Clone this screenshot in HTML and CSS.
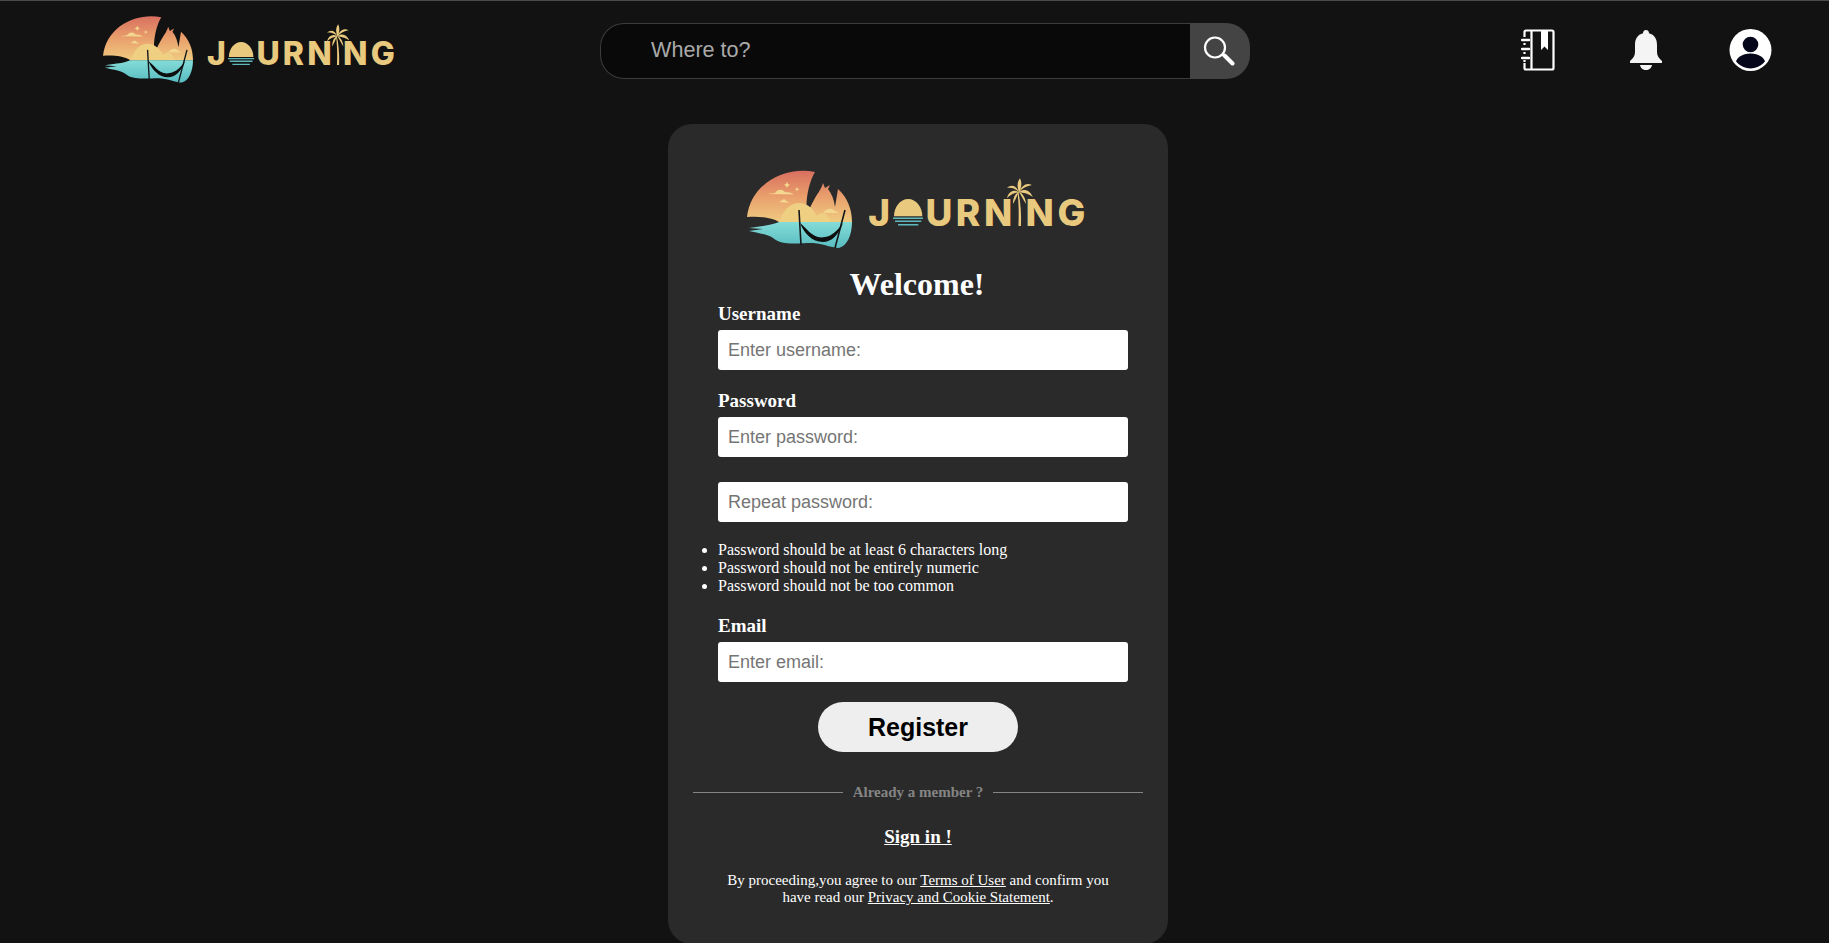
FILE: index.html
```html
<!DOCTYPE html>
<html lang="en">
<head>
    <meta charset="UTF-8">
    <meta name="viewport" content="width=device-width, initial-scale=1.0">
    <title>Journing - Register</title>
    <link rel="stylesheet" href="styles.css">
</head>
<body>

<!-- Logo parts, used in the navbar and in the card -->
<svg class="sprites" width="0" height="0" aria-hidden="true">
    <defs>
        <linearGradient id="sky" x1="0" y1="0" x2="0" y2="1">
            <stop offset="0" stop-color="#d86f5f"/>
            <stop offset="0.5" stop-color="#e99f6c"/>
            <stop offset="1" stop-color="#efcb80"/>
        </linearGradient>
        <linearGradient id="sea" x1="0" y1="0" x2="0" y2="1">
            <stop offset="0" stop-color="#84dcd8"/>
            <stop offset="1" stop-color="#58bcc0"/>
        </linearGradient>
        <symbol id="emblem" viewBox="0 0 105 78">
            <path fill="url(#sky)" d="M68 2C40-4 4 12 0 47C10 46 24 47 32 52L105 52C105 40 101 28 91 19L88 37C87 30 85 24 81 19L83 15L78 18L76 13C74 20 70 24 67 30C64 35 62 40 60 44C58 30 62 12 68 2Z"/>
            <path fill="#efcf82" d="M33 52C35 41 43 33 52 33C61 33 67 40 70 46C74 41 80 42 84 52Z"/>
            <path fill="#f3d68f" d="M20 24L28 23C31 19 35 19 38 22C42 22 45 23 47 24.500Z M32 32L37 29L42 33Z M78 41C81 38 85 38 88 41L92 43H76Z"/>
            <path fill="#f5d98f" d="M40 12l1 2 2 1-2 1-1 2-1-2-2-1 2-1zM50 17l.7 1.500 1.500.7-1.500.7-.7 1.500-.7-1.500-1.500-.7 1.500-.7z"/>
            <path fill="url(#sea)" d="M32 52L105 52C105 65 100 76 92 78C85 78 78 74 66 73C50 73 35 76 26 68C20 64 10 63 2 61L16 59L2 58L16 56C24 55 29 53 32 52Z"/>
            <path fill="none" stroke="#14181a" stroke-width="1.600" d="M52 40L54 75M98 40L88 78"/>
            <path fill="#0e0e0e" d="M53 53C60 58 66 70 78 67C85 66 91 60 96 53C91 66 84 72 76 72C65 72 57 63 53 53Z"/>
        </symbol>
        <symbol id="sun" viewBox="0 0 30 27">
            <path fill="currentColor" d="M1 17C1 8 7 0 15 0C23 0 29 8 29 17Z"/>
            <path fill="none" stroke="#5fb8bc" stroke-width="1.500" d="M0 19H30M2 22H28M5 25.500H25"/>
        </symbol>
        <symbol id="palm" viewBox="0 0 26 48">
            <path fill="currentColor" d="M11.500 14C14 26 14.500 38 14 48H11.500C12 38 12 26 10.500 14Z"/>
            <path fill="currentColor" d="M12 14C9 7 4 6 0 10C4 9 8 10 12 14ZM12 14C7 11 2 13 0 20C4 16 8 15 12 14ZM12 14C8 15 6 20 6 26C9 21 10 17 12 14ZM12 14C10 9 10 4 13 0C15 4 15 9 12 14ZM12 14C15 7 20 4 25 7C20 8 16 10 12 14ZM12 14C17 10 23 12 26 19C21 15 16 15 12 14ZM12 14C16 15 19 21 19 26C16 21 14 17 12 14Z"/>
        </symbol>
    </defs>
</svg>

<header class="navbar">
    <a class="brand brand-nav" href="#">
        <svg class="brand-emblem"><use href="#emblem"/></svg>
        <span class="brand-word">J<svg class="brand-sun"><use href="#sun"/></svg>URN<svg class="brand-palm"><use href="#palm"/></svg>NG</span>
    </a>

    <form class="search">
        <input class="search-input" type="text" placeholder="Where to?">
        <button class="search-btn" type="button" aria-label="Search">
            <svg width="32" height="30" viewBox="0 0 32 30">
                <circle cx="12" cy="11.500" r="10" fill="none" stroke="#fff" stroke-width="2.200"/>
                <path d="M19 18.500L22 20" stroke="#fff" stroke-width="2"/>
                <path d="M21.500 19.500L29.500 27.500" stroke="#fff" stroke-width="4" stroke-linecap="round"/>
            </svg>
        </button>
    </form>

    <nav class="nav-icons">
        <a href="#" aria-label="Journal">
            <svg class="icon-book" width="34" height="42" viewBox="0 0 34 42">
                <path fill="none" stroke="#fff" stroke-width="2.200" d="M3.500 8V3Q3.500 1.500 5 1.500H31Q32.500 1.500 32.500 3V39Q32.500 40.500 31 40.500H5Q3.500 40.500 3.500 39V34"/>
                <path fill="none" stroke="#fff" stroke-width="2.200" d="M3.500 14V16M3.500 23V25M3.500 31V33M10.500 1.500V40.500"/>
                <path fill="#fff" d="M20 1.500H27V21L23.500 17.500L20 21Z"/>
                <path fill="none" stroke="#fff" stroke-width="2.400" stroke-linecap="round" d="M1 11H8M1 20H8M1 29H8"/>
            </svg>
        </a>
        <a href="#" aria-label="Notifications">
            <svg width="32" height="40" viewBox="0 0 32 40">
                <path fill="#f4f4f4" d="M16 0C18 0 19 1.500 19 3.200C24.500 4.500 27 9 27 15V22C27 26 29 28.500 32 31V33H0V31C3 28.500 5 26 5 22V15C5 9 7.500 4.500 13 3.200C13 1.500 14 0 16 0Z"/>
                <path fill="#f4f4f4" d="M10 35H22C21.500 38 19 40 16 40C13 40 10.500 38 10 35Z"/>
            </svg>
        </a>
        <a href="#" aria-label="Profile">
            <svg width="43" height="42" viewBox="0 0 43 42">
                <defs>
                    <clipPath id="avatar-clip"><circle cx="21.500" cy="21" r="18.500"/></clipPath>
                </defs>
                <circle cx="21.500" cy="21" r="21" fill="#fff"/>
                <circle cx="21.500" cy="15.500" r="7.800" fill="#06061a"/>
                <ellipse cx="21.500" cy="35" rx="15" ry="10.500" fill="#06061a" clip-path="url(#avatar-clip)"/>
            </svg>
        </a>
    </nav>
</header>

<main class="page">
    <div class="card">
        <a class="brand brand-card" href="#">
            <svg class="brand-emblem"><use href="#emblem"/></svg>
            <span class="brand-word">J<svg class="brand-sun"><use href="#sun"/></svg>URN<svg class="brand-palm"><use href="#palm"/></svg>NG</span>
        </a>

        <h2 class="card-title">Welcome!</h2>

        <form class="register-form">
            <div class="field">
                <label for="username">Username</label>
                <input type="text" id="username" placeholder="Enter username:">
            </div>
            <div class="field">
                <label for="password">Password</label>
                <input type="password" id="password" placeholder="Enter password:">
            </div>
            <div class="field field-repeat">
                <input type="password" id="password2" placeholder="Repeat password:">
            </div>
            <ul class="rules">
                <li>Password should be at least 6 characters long</li>
                <li>Password should not be entirely numeric</li>
                <li>Password should not be too common</li>
            </ul>
            <div class="field">
                <label for="email">Email</label>
                <input type="email" id="email" placeholder="Enter email:">
            </div>
        </form>

        <button class="register-btn" type="button">Register</button>

        <div class="divider"><span>Already a member ?</span></div>

        <a class="signin" href="#">Sign in !</a>

        <p class="legal">By proceeding,you agree to our <a href="#">Terms of User</a> and confirm you have read our <a href="#">Privacy and Cookie Statement</a>.</p>
    </div>
</main>

</body>
</html>
```

FILE: styles.css
```css
body {
    margin: 0;
    background-color: #121212;
    color: #fff;
    font-family: "Liberation Serif", serif;
    overflow: hidden;
}
.sprites {
    display: block;
    height: 0;
}
a {
    color: inherit;
}

/* Navbar */
.navbar {
    display: flex;
    align-items: center;
    height: 100px;
    border-top: 1px solid #4a4a4a;
    box-sizing: border-box;
    padding-left: 103px;
}
.brand {
    display: flex;
    align-items: center;
    text-decoration: none;
    color: #e8c97e;
}
.brand-emblem,
.brand-word {
    flex: none;
}
.brand-word {
    display: flex;
    align-items: flex-end;
    font-family: Inter, sans-serif;
    font-weight: 800;
    line-height: 0.74;
    letter-spacing: 0.097em;
}
.brand-sun {
    width: 0.82em;
    height: 0.74em;
    margin: 0 0.06em 0 -0.02em;
}
.brand-palm {
    width: 0.7em;
    height: 1.3em;
    margin: 0 -0.2em 0 -0.24em;
}
.brand-nav {
    width: 291px;
    height: 68px;
    margin-top: -4px;
}
.brand-nav .brand-emblem {
    width: 90px;
    height: 68px;
    margin-right: 14px;
}
.brand-nav .brand-word {
    font-size: 32px;
    margin-top: -8px;
}
.brand-card {
    justify-content: center;
    height: 78px;
}
.brand-card .brand-emblem {
    width: 105px;
    height: 78px;
    margin-right: 16px;
}
.brand-card .brand-word {
    font-size: 37px;
    margin-top: -13px;
}

.search {
    display: flex;
    width: 650px;
    height: 56px;
    margin-left: 206px;
}
.search-input {
    flex: 1;
    min-width: 0;
    box-sizing: border-box;
    background-color: #090909;
    border: 1px solid #3c3c3c;
    border-right: none;
    border-radius: 24px 0 0 24px;
    padding: 0 0 2px 50px;
    font-family: "Liberation Sans", sans-serif;
    font-size: 21.600px;
    color: #fff;
}
.search-input::placeholder {
    color: #a9a9a9;
}
.search-btn {
    width: 60px;
    border: none;
    border-radius: 0 24px 24px 0;
    background-color: #454445;
    padding: 0;
    display: flex;
    align-items: center;
    justify-content: center;
}
.search-btn svg {
    margin-right: 2px;
}

.nav-icons {
    display: flex;
    align-items: center;
    margin-left: 271px;
    margin-top: -2px;
}
.nav-icons a {
    display: flex;
}
.nav-icons a:nth-child(2) {
    margin-left: 75px;
}
.nav-icons a:nth-child(3) {
    margin-left: 67px;
}

/* Register card */
.page {
    display: flex;
    justify-content: center;
    padding: 24px 0 0 7px;
}
.card {
    box-sizing: border-box;
    width: 500px;
    height: 820px;
    padding: 46px 0 0;
    background-color: #2a2a2a;
    border-radius: 24px;
    display: flex;
    flex-direction: column;
    align-items: center;
}
.card-title {
    margin: 18px 2px 0 0;
    font-size: 32px;
    line-height: 37px;
    font-weight: bold;
}
.register-form {
    align-self: stretch;
    padding: 0 40px 0 50px;
}
.field {
    margin-bottom: 20px;
}
.field label {
    display: block;
    font-size: 19px;
    font-weight: bold;
    line-height: 22px;
    margin-bottom: 5px;
}
.field input {
    display: block;
    box-sizing: border-box;
    width: 100%;
    height: 40px;
    padding: 0 10px;
    border: none;
    border-radius: 3px;
    background-color: #fff;
    font-family: "Liberation Sans", sans-serif;
    font-size: 18px;
}
.field input::placeholder {
    color: #757575;
}
.field-repeat {
    margin-top: 25px;
    margin-bottom: 19px;
}
.rules {
    margin: 0 0 20px;
    padding-left: 0;
    list-style-position: outside;
    font-size: 16px;
    line-height: 18px;
}
.register-btn {
    width: 200px;
    height: 50px;
    border: none;
    border-radius: 25px;
    background-color: #eee;
    color: #000;
    font-family: "Liberation Sans", sans-serif;
    font-size: 25px;
    font-weight: bold;
}
.divider {
    align-self: stretch;
    display: flex;
    align-items: center;
    gap: 10px;
    margin: 31px 25px 0;
    color: #858585;
    font-size: 15px;
    font-weight: bold;
    line-height: 18px;
}
.divider::before,
.divider::after {
    content: "";
    flex: 1;
    border-top: 1px solid #858585;
}
.signin {
    margin-top: 25px;
    font-size: 19px;
    font-weight: bold;
    line-height: 22px;
}
.legal {
    width: 400px;
    margin: 24px 0 0;
    font-size: 15px;
    line-height: 17px;
    text-align: center;
}
```
